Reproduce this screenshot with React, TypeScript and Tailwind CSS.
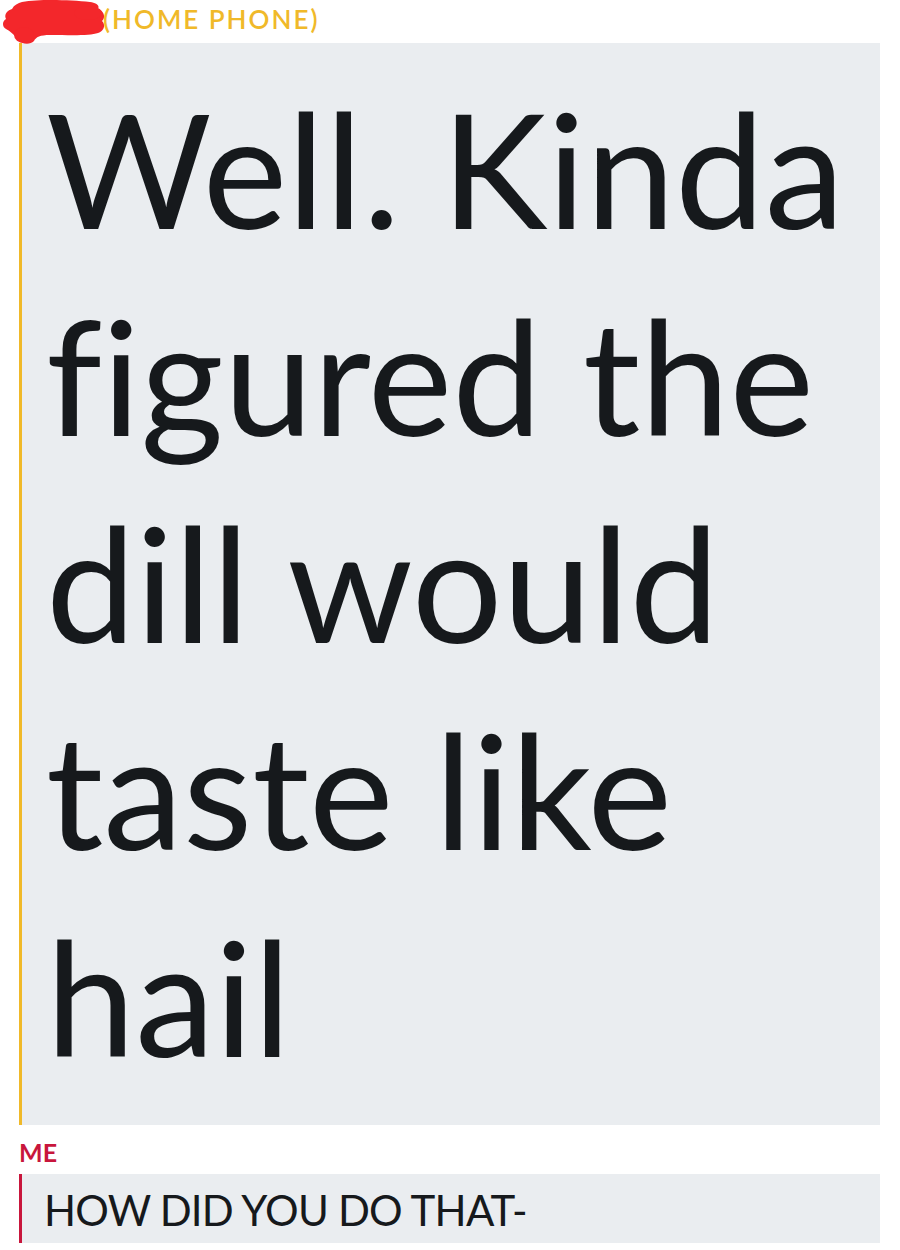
import React from 'react';

const Scribble: React.FC = () => (
  <svg className="absolute left-0 top-0" width="108" height="46" viewBox="0 0 108 46">
    <g fill="#f3272b">
      <path d="M22 2 C40 -1 70 0 90 2 C96 3 100 5 98 9 C104 11 106 17 102 21 C106 25 104 31 98 33 C90 36 70 35 50 35 C40 35 36 37 34 41 C30 45 22 45 18 39 C14 35 10 31 6 29 C2 27 2 21 6 19 C4 15 6 11 12 9 C14 5 18 3 22 2 Z" />
      <ellipse cx="88" cy="13" rx="14" ry="7" />
      <ellipse cx="24" cy="35" rx="10" ry="8" />
    </g>
  </svg>
);

const App: React.FC = () => {
  return (
    <div className="w-[900px] h-[1250px] bg-white overflow-hidden" style={{ fontFamily: 'Lato, "Open Sans", sans-serif' }}>
      <div className="relative h-[43px] pl-[103px] pt-[4px]">
        <span className="text-[26px] leading-[30px] font-semibold text-[#f0b929] tracking-[2px]">(HOME PHONE)</span>
        <Scribble />
      </div>
      <div className="ml-[19px] mr-[20px] border-l-[3px] border-[#f0b929] bg-[#eaedf0] h-[1082px] pl-[24px] pt-[21px]">
        <p className="text-[#16191c] text-[160px] leading-[207px] [font-variant-ligatures:none]">
          Well. Kinda figured the dill would taste like hail
        </p>
      </div>
      <div className="pl-[19px] pt-[13px] h-[49px]">
        <span className="text-[25px] leading-[28px] font-bold text-[#c8163c]">ME</span>
      </div>
      <div className="ml-[19px] mr-[20px] border-l-[3px] border-[#c8163c] bg-[#eaedf0] h-[69px] pl-[22px] pt-[14px]">
        <p className="text-[#16191c] text-[42px] leading-[44px] tracking-[-0.8px]">HOW DID YOU DO THAT-</p>
      </div>
    </div>
  );
};

export default App;
